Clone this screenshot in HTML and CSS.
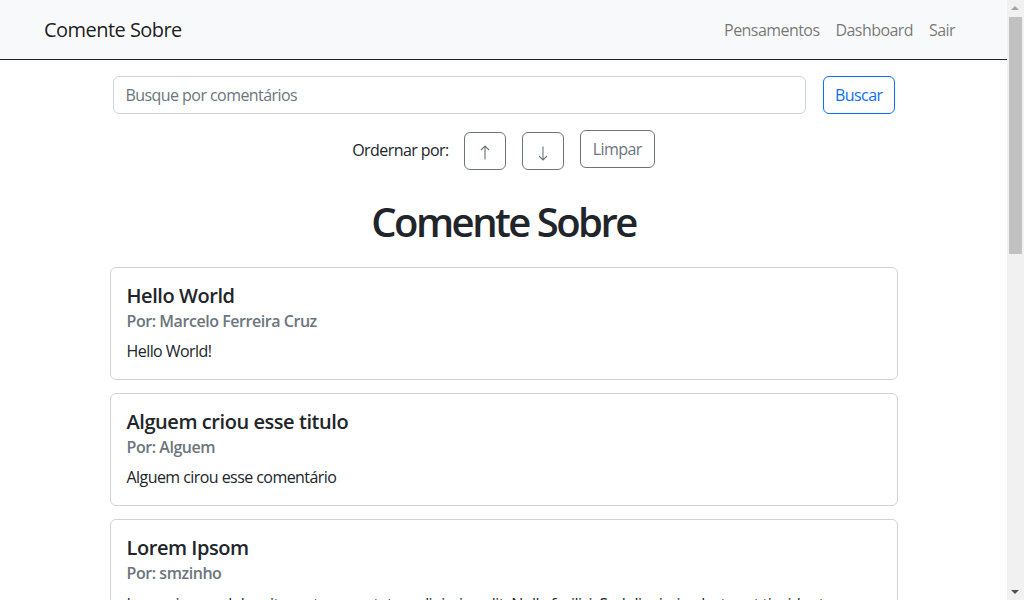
FILE: index.html
```html
<!DOCTYPE html>
<html lang="pt-BR">
<head>
<meta charset="utf-8">
<title>Comente Sobre</title>
<link rel="stylesheet" href="styles.css">
</head>
<body>
<nav class="navbar">
  <a class="brand" href="#">Comente Sobre</a>
  <ul class="nav-links">
    <li><a href="#">Pensamentos</a></li>
    <li><a href="#">Dashboard</a></li>
    <li><a href="#">Sair</a></li>
  </ul>
</nav>
<main class="main">
  <form class="search-form">
    <input class="search-input" type="text" placeholder="Busque por comentários">
    <button class="btn btn-primary-outline btn-search" type="button">Buscar</button>
  </form>
  <div class="order-row">
    <span class="order-label">Ordernar por:</span>
    <button class="btn btn-secondary-outline btn-arrow" type="button" aria-label="Crescente">
      <svg class="arrow-icon" viewBox="0 0 10 15" width="10" height="15"><path d="M5 14.5V1M1 5L5 1L9 5" fill="none" stroke="currentColor" stroke-width="1.1"/></svg>
    </button>
    <button class="btn btn-secondary-outline btn-arrow" type="button" aria-label="Decrescente">
      <svg class="arrow-icon arrow-down" viewBox="0 0 10 15" width="10" height="15"><path d="M5 0.5V14M1 10L5 14L9 10" fill="none" stroke="currentColor" stroke-width="1.1"/></svg>
    </button>
    <button class="btn btn-secondary-outline btn-clear" type="button">Limpar</button>
  </div>
  <h1 class="page-title">Comente Sobre</h1>
  <section class="cards">
    <article class="card">
      <h5 class="card-title">Hello World</h5>
      <h6 class="card-subtitle">Por: Marcelo Ferreira Cruz</h6>
      <p class="card-text">Hello World!</p>
    </article>
    <article class="card">
      <h5 class="card-title">Alguem criou esse titulo</h5>
      <h6 class="card-subtitle">Por: Alguem</h6>
      <p class="card-text">Alguem cirou esse comentário</p>
    </article>
    <article class="card">
      <h5 class="card-title">Lorem Ipsom</h5>
      <h6 class="card-subtitle">Por: smzinho</h6>
      <p class="card-text">Lorem ipsum dolor sit amet, consectetur adipiscing elit. Nulla facilisi. Sed dignissim, lectus et tincidunt pulvinar, augue nulla finibus justo, vitae commodo magna nisl in orci. Pellentesque habitant morbi tristique senectus et netus et malesuada fames ac turpis egestas.</p>
    </article>
  </section>
</main>
<div class="fake-scrollbar" aria-hidden="true">
  <span class="sb-arrow sb-up"></span>
  <span class="sb-thumb"></span>
  <span class="sb-arrow sb-down"></span>
</div>
</body>
</html>
```
FILE: styles.css
```css
* { box-sizing: border-box; }
body {
  margin: 0;
  padding-right: 17px;
  font-family: "Open Sans", "Noto Sans", sans-serif;
  font-size: 16px;
  line-height: 1.5;
  letter-spacing: -0.035em;
  color: #212529;
  background: #fff;
}
.navbar {
  display: flex;
  align-items: center;
  justify-content: space-between;
  height: 60px;
  padding: 0 44px;
  background: #f8f9fa;
  border-bottom: 1px solid #212529;
}
.brand {
  font-size: 20px;
  letter-spacing: -0.027em;
  color: rgba(0,0,0,.9);
  text-decoration: none;
}
.nav-links {
  display: flex;
  list-style: none;
  margin: 0;
  padding: 0;
}
.nav-links a {
  display: block;
  padding: 8px;
  color: rgba(0,0,0,.55);
  text-decoration: none;
}
.main {
  max-width: 788px;
  margin: 0 auto;
  padding-top: 16px;
}
.search-form {
  display: flex;
  gap: 17px;
  margin: 0 3px;
}
.search-input {
  flex: 1;
  height: 38px;
  padding: 6px 12px;
  font: inherit;
  letter-spacing: inherit;
  color: #212529;
  border: 1px solid #ced4da;
  border-radius: 6px;
}
.search-input::placeholder { color: #6c757d; }
.btn {
  height: 38px;
  padding: 6px 12px;
  font: inherit;
  letter-spacing: inherit;
  background: transparent;
  border-radius: 6px;
  cursor: pointer;
}
.btn-search { padding: 6px 11px; }
.btn-primary-outline {
  color: #0d6efd;
  border: 1px solid #0d6efd;
}
.btn-secondary-outline {
  color: #6c757d;
  border: 1px solid #6c757d;
}
.order-row {
  display: flex;
  justify-content: center;
  align-items: flex-start;
  gap: 16px;
  margin-top: 16px;
}
.order-label {
  margin-top: 8px;
  margin-right: -1px;
}
.btn-arrow {
  display: flex;
  align-items: center;
  justify-content: center;
  width: 42px;
  margin-top: 2px;
  padding: 0;
}
.arrow-icon { display: block; margin-top: 2px; }
.arrow-down { margin-top: 5px; }
.page-title {
  margin: 28px 0 21px;
  font-size: 40px;
  font-weight: 600;
  line-height: 1.2;
  letter-spacing: -0.063em;
  text-align: center;
}
.cards {
  display: flex;
  flex-direction: column;
  gap: 13px;
}
.card {
  padding: 16px;
  border: 1px solid rgba(0,0,0,.175);
  border-radius: 6px;
}
.card-title {
  margin: 0 0 4px;
  font-size: 20px;
  font-weight: 600;
  line-height: 1.2;
  letter-spacing: -0.022em;
}
.card-subtitle {
  margin: 0 0 8px;
  font-size: 16px;
  font-weight: 600;
  line-height: 1.2;
  letter-spacing: -0.028em;
  color: #6c757d;
}
.card-text { margin: 0; }
.fake-scrollbar {
  position: fixed;
  top: 0;
  right: 0;
  width: 17px;
  height: 100vh;
  background: #f1f1f1;
}
.sb-thumb {
  position: absolute;
  top: 17px;
  left: 2px;
  width: 13px;
  height: 237px;
  background: #c1c1c1;
}
.sb-arrow {
  position: absolute;
  left: 4px;
  width: 0;
  height: 0;
  border-left: 4px solid transparent;
  border-right: 4px solid transparent;
}
.sb-up { top: 6px; border-bottom: 4px solid #a3a3a3; }
.sb-down { bottom: 6px; border-top: 4px solid #505050; }
```
